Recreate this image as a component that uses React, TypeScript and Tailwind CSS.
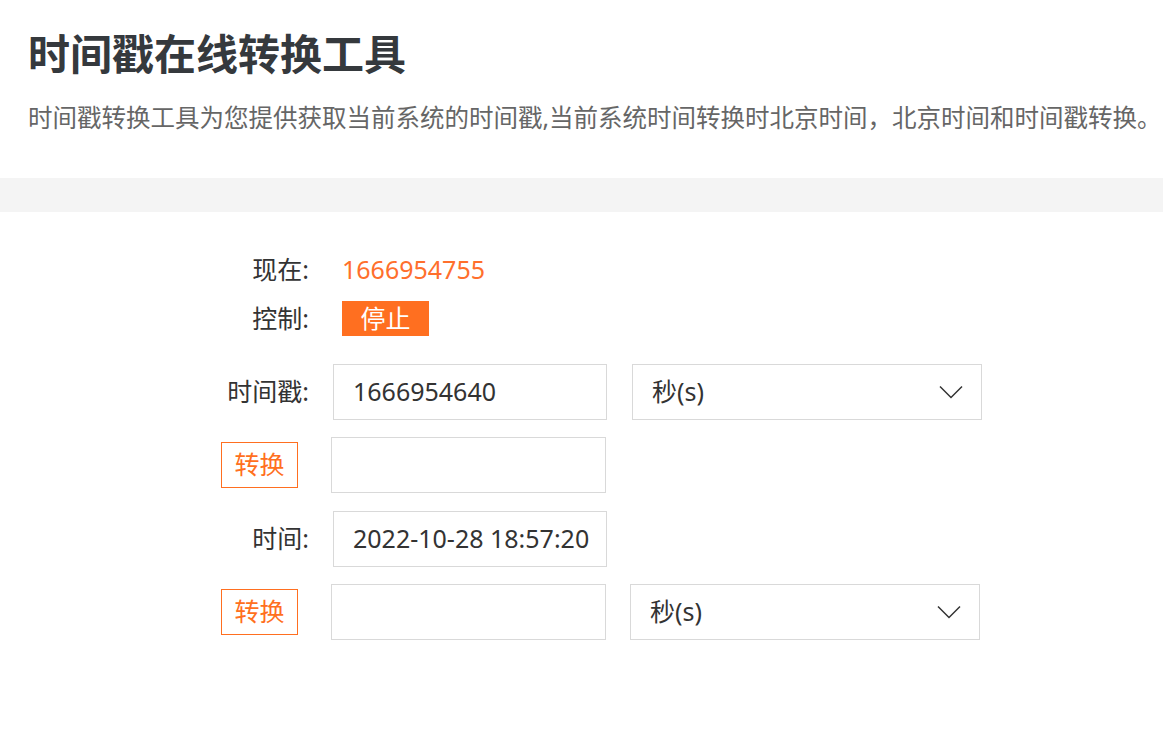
const font = { fontFamily: '"Noto Sans", "Noto Sans CJK SC", sans-serif' };

function Chevron() {
  return (
    <svg width="24" height="14" viewBox="0 0 24 14" fill="none">
      <path d="M1 1.5 L12 12.5 L23 1.5" stroke="#333" strokeWidth="1.5" />
    </svg>
  );
}

function Select({ ml }: { ml: string }) {
  return (
    <div
      className={`${ml} flex h-[56px] w-[350px] items-center justify-between border border-[#d9d9d9] pl-[19px] pr-[18px] text-[25px] text-[#333]`}
    >
      <span>秒(s)</span>
      <Chevron />
    </div>
  );
}

function Label({ text }: { text: string }) {
  return <div className="w-[109px] shrink-0 text-right text-[25px] text-[#333]">{text}</div>;
}

function ConvertButton() {
  return (
    <div className="w-[109px] shrink-0">
      <button className="ml-[21px] flex h-[46px] w-[77px] items-center justify-center border border-[#ff6f20] text-[25px] text-[#ff6f20]">
        转换
      </button>
    </div>
  );
}

export default function App() {
  return (
    <div className="min-h-[732px] w-full bg-white" style={font}>
      <header className="px-[28px] pt-[33px] pb-[48px]">
        <h1 className="text-[42px] leading-[42px] font-bold text-[#35393d]">时间戳在线转换工具</h1>
        <p className="mt-[30px] text-[24.5px] leading-[25px] whitespace-nowrap text-[#666]">
          时间戳转换工具为您提供获取当前系统的时间戳,当前系统时间转换时北京时间，北京时间和时间戳转换。
        </p>
      </header>

      <div className="h-[34px] bg-[#f4f4f4]" />

      <div className="pl-[200px] pt-[40px]">
        <div className="flex h-[36px] items-center">
          <Label text="现在:" />
          <span className="ml-[33px] text-[25px] text-[#ff6f2c]">1666954755</span>
        </div>

        <div className="mt-[13px] flex h-[35px] items-center">
          <Label text="控制:" />
          <button className="ml-[33px] flex h-[35px] w-[87px] items-center justify-center bg-[#ff6f20] text-[25px] text-white">
            停止
          </button>
        </div>

        <div className="mt-[28px] flex items-center">
          <Label text="时间戳:" />
          <div className="ml-[24px] flex h-[56px] w-[274px] items-center border border-[#d9d9d9] pl-[19px] text-[25px] text-[#333]">
            1666954640
          </div>
          <Select ml="ml-[25px]" />
        </div>

        <div className="mt-[17px] flex items-center">
          <ConvertButton />
          <div className="ml-[22px] h-[56px] w-[275px] border border-[#d9d9d9]" />
        </div>

        <div className="mt-[18px] flex items-center">
          <Label text="时间:" />
          <div className="ml-[24px] flex h-[56px] w-[274px] items-center overflow-hidden border border-[#d9d9d9] pl-[19px] text-[25px] whitespace-nowrap text-[#333]">
            2022-10-28 18:57:20
          </div>
        </div>

        <div className="mt-[17px] flex items-center">
          <ConvertButton />
          <div className="ml-[22px] h-[56px] w-[275px] border border-[#d9d9d9]" />
          <Select ml="ml-[24px]" />
        </div>
      </div>
    </div>
  );
}
